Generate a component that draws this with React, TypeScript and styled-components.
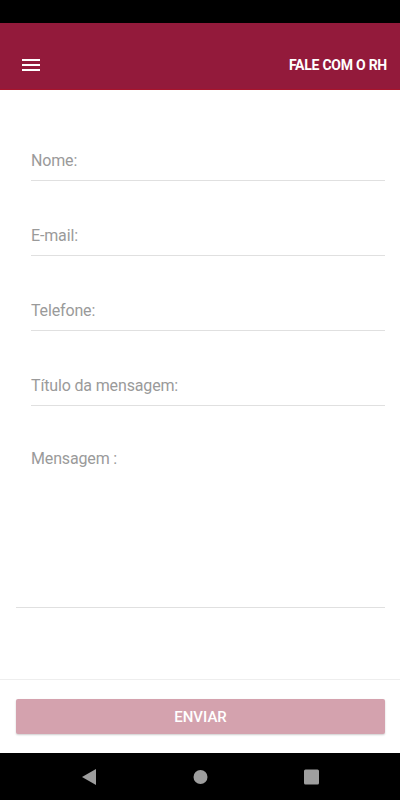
import React from 'react'
import styled, { createGlobalStyle } from 'styled-components'

const GlobalStyle = createGlobalStyle`
  html, body {
    margin: 0;
    padding: 0;
    background: #fff;
    font-family: Roboto, "Liberation Sans", sans-serif;
  }
  #root {
    height: 800px;
  }
`

const Screen = styled.div`
  display: flex;
  flex-direction: column;
  height: 800px;
  width: 400px;
  background: #fff;
`

const StatusBar = styled.div`
  height: 23px;
  background: #000;
  flex-shrink: 0;
`

const Header = styled.header`
  display: flex;
  align-items: center;
  justify-content: space-between;
  height: 67px;
  box-sizing: border-box;
  padding: 17px 13px 0 22px;
  background: #931a3b;
  border-bottom: 1px solid #a8142c;
  flex-shrink: 0;
`

const MenuButton = styled.button`
  display: flex;
  flex-direction: column;
  justify-content: space-between;
  width: 18px;
  height: 12px;
  padding: 0;
  border: none;
  background: transparent;
`

const MenuLine = styled.span`
  display: block;
  height: 2px;
  width: 100%;
  background: #fff;
`

const Title = styled.h1`
  margin: 0;
  color: #fff;
  font-size: 14px;
  font-weight: 700;
  letter-spacing: -0.25px;
`

const Form = styled.div`
  display: flex;
  flex-direction: column;
  flex: 1;
  padding: 16px 15px 0 16px;
`

const Field = styled.div`
  display: flex;
  align-items: flex-end;
  height: 75px;
  box-sizing: border-box;
  margin-left: 15px;
  padding-bottom: 9px;
  border-bottom: 1px solid #e0e0e0;
`

const Label = styled.span<{ $inset?: boolean }>`
  color: #9a9a9a;
  font-size: 16px;
  line-height: 20px;
  letter-spacing: -0.15px;
  padding-left: ${(p) => (p.$inset ? '15px' : '0')};
`

const MessageField = styled.div`
  height: 202px;
  box-sizing: border-box;
  padding-top: 43px;
  border-bottom: 1px solid #e0e0e0;
`

const Footer = styled.div`
  padding: 19px 15px 19px 16px;
  border-top: 1px solid #eeeeee;
  flex-shrink: 0;
`

const SendButton = styled.button`
  display: block;
  width: 100%;
  height: 35px;
  border: none;
  border-radius: 2px;
  background: #d4a2ae;
  box-shadow: 0 1px 2px rgba(0, 0, 0, 0.2);
  color: #fff;
  font-family: Roboto, "Liberation Sans", sans-serif;
  font-size: 15px;
  font-weight: 500;
`

const NavBar = styled.div`
  display: flex;
  align-items: center;
  justify-content: center;
  gap: 96px;
  height: 47px;
  background: #000;
  flex-shrink: 0;
`

const NavIcon = styled.svg`
  display: block;
  width: 15px;
  height: 16px;
`

const fields = ['Nome:', 'E-mail:', 'Telefone:', 'Título da mensagem:']

export default function App() {
  return (
    <Screen>
      <GlobalStyle />
      <StatusBar />
      <Header>
        <MenuButton aria-label="menu">
          <MenuLine />
          <MenuLine />
          <MenuLine />
        </MenuButton>
        <Title>FALE COM O RH</Title>
      </Header>
      <Form>
        {fields.map((f) => (
          <Field key={f}>
            <Label>{f}</Label>
          </Field>
        ))}
        <MessageField>
          <Label $inset>Mensagem :</Label>
        </MessageField>
      </Form>
      <Footer>
        <SendButton>ENVIAR</SendButton>
      </Footer>
      <NavBar>
        <NavIcon viewBox="0 0 15 16">
          <path d="M14 0 L14 16 L0 8 Z" fill="#9e9e9e" />
        </NavIcon>
        <NavIcon viewBox="0 0 15 16">
          <circle cx="7.5" cy="8" r="7" fill="#9e9e9e" />
        </NavIcon>
        <NavIcon viewBox="0 0 15 16">
          <rect x="0" y="0.5" width="15" height="15" rx="1.5" fill="#9e9e9e" />
        </NavIcon>
      </NavBar>
    </Screen>
  )
}
